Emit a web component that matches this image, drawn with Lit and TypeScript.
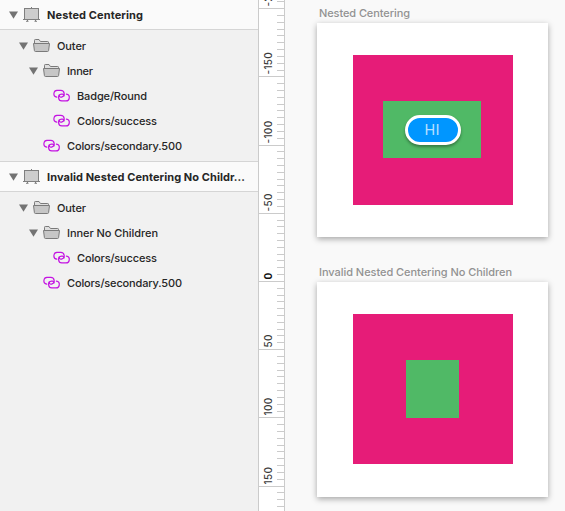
import { LitElement, html, css, svg } from "lit";
import { customElement, property } from "lit/decorators.js";

type Kind = "folder" | "symbol";
interface Layer { name: string; kind: Kind; depth: number; w: number; }
interface Group { name: string; w: number; layers: Layer[]; }

const GROUPS: Group[] = [
  {
    name: "Nested Centering", w: 96,
    layers: [
      { name: "Outer", kind: "folder", depth: 1, w: 29 },
      { name: "Inner", kind: "folder", depth: 2, w: 26 },
      { name: "Badge/Round", kind: "symbol", depth: 3, w: 70 },
      { name: "Colors/success", kind: "symbol", depth: 3, w: 80 },
      { name: "Colors/secondary.500", kind: "symbol", depth: 2, w: 115 },
    ],
  },
  {
    name: "Invalid Nested Centering No Childr...", w: 198,
    layers: [
      { name: "Outer", kind: "folder", depth: 1, w: 29 },
      { name: "Inner No Children", kind: "folder", depth: 2, w: 91 },
      { name: "Colors/success", kind: "symbol", depth: 3, w: 80 },
      { name: "Colors/secondary.500", kind: "symbol", depth: 2, w: 115 },
    ],
  },
];

const arrow = html`<svg class="arrow" width="9" height="8" viewBox="0 0 9 8"><path d="M0 .5H9L4.5 7.7Z" fill="#737373"/></svg>`;

const artboardIcon = html`<svg width="17" height="15" viewBox="0 0 17 15" fill="none" stroke="#7f7f7f">
  <path d="M8.5 0V1M4.5 13V14M12.5 13V14M3 14.3H5.5M11.5 14.3H14"/>
  <rect x="1.5" y="1.5" width="14" height="11" fill="#cdcdcd"/>
  <path d="M0 12.5H17"/>
</svg>`;

const folderIcon = html`<svg width="17" height="13" viewBox="0 0 17 13" fill="#c6c6c6" stroke="#7a7a7a" stroke-linejoin="round">
  <path d="M1.5 5V1.3Q1.5 .5 2.3 .5H6L7.4 2.5H14.7Q15.5 2.5 15.5 3.3V5" fill="#dedede"/>
  <path d="M.5 4.5H16.5L15.6 11.5Q15.5 12.5 14.5 12.5H2.5Q1.5 12.5 1.4 11.5Z"/>
</svg>`;

const symbolIcon = html`<svg width="16" height="13" viewBox="0 0 16 13" fill="none" stroke="#c414e2" stroke-width="1.2" stroke-linecap="round">
  <path d="M2.8 8.1A3.3 3.3 0 0 1 3.8 1.4H6.8A3.4 3.4 0 0 1 7.6 8.1H7Q5.1 8 5.2 6.2"/>
  <path d="M12.4 5.2A3.3 3.3 0 0 1 11.4 11.9H8.4A3.4 3.4 0 0 1 7.6 5.1H8.2Q10.1 5.2 10 7"/>
</svg>`;

@customElement("layer-list")
class LayerList extends LitElement {
  static styles = css`
    :host { display: block; font: 500 11px/25px Inter, "Liberation Sans", sans-serif; }
    svg { display: block; flex: none; overflow: visible; }
    .head { display: flex; align-items: center; height: 29px; padding-left: 9px; background: #fafafa; border-bottom: 1px solid #d5d5d5; font-weight: 700; }
    .head.next { border-top: 1px solid #d5d5d5; }
    .arrow { margin: 1px 5px 0 0; }
    .rows { padding: 3px 0; }
    .row { display: flex; align-items: center; height: 25px; }
    .d1 { padding-left: 19px; }
    .d2 { padding-left: 29px; }
    .symbol.d2 { padding-left: 44px; }
    .symbol.d3 { padding-left: 54px; }
    .label { margin-left: 7px; }
    text { fill: #262626; }
  `;
  label(t: string, w: number) {
    return html`<svg class="label" width=${w} height="25"><text x="0" y="16.5" textLength=${w}>${t}</text></svg>`;
  }
  render() {
    return GROUPS.map((g, i) => html`
      <div class="head ${i ? "next" : ""}">${arrow}${artboardIcon}${this.label(g.name, g.w)}</div>
      <div class="rows">
        ${g.layers.map((l) => html`<div class="row ${l.kind} d${l.depth}">
          ${l.kind === "folder" ? html`${arrow}${folderIcon}` : symbolIcon}${this.label(l.name, l.w)}
        </div>`)}
      </div>`);
  }
}

@customElement("canvas-ruler")
class CanvasRuler extends LitElement {
  static styles = css`
    :host { display: block; height: 511px; background: #fff; border: solid #cbcbcb; border-width: 0 1px; overflow: hidden; }
    svg { display: block; }
    text { font: 500 10px Inter, "Liberation Sans", sans-serif; fill: #3c3c3c; letter-spacing: .3px; }
    .zero { font-weight: 700; fill: #111; }
  `;
  render() {
    const ticks = Array.from({ length: 75 }, (_, n) => {
      const k = n - 1;
      const y = Math.floor(8.62 + 6.82 * k);
      const major = k % 10 === 0;
      const value = k * 5 - 200;
      return svg`<rect x=${major ? 0 : 18} y=${y} width=${major ? 25 : 7} height="1" fill="#cbcbcb"/>
        ${major ? svg`<text class=${value === 0 ? "zero" : ""} transform="translate(12.5 ${y - 1.5}) rotate(-90)">${value}</text>` : ""}`;
    });
    return html`<svg width="25" height="511">${ticks}</svg>`;
  }
}

@customElement("art-board")
class ArtBoard extends LitElement {
  @property() name = "";
  @property({ type: Number }) w = 0;
  @property({ type: Boolean }) badge = false;
  static styles = css`
    :host { display: block; width: 231px; }
    .title { display: block; margin-left: 2px; height: 17px; overflow: visible; }
    .title text { font: 500 11px Inter, "Liberation Sans", sans-serif; fill: #929292; }
    .board { height: 214px; background: #fff; box-shadow: 0 2px 6px rgba(0,0,0,.34); padding: 32px 35px 32px 36px; box-sizing: border-box; }
    .board.plain { height: 215px; }
    .outer { height: 150px; background: #e61c78; display: flex; padding: 46px 0 0 53px; box-sizing: border-box; }
    .outer.badge { padding-left: 30px; }
    .inner { width: 53px; height: 58px; background: #50b966; }
    .wide { width: 98px; height: 57px; display: flex; justify-content: center; align-items: center; }
    .pill { width: 56px; height: 30px; margin: 1px 0 0 1px; box-sizing: border-box; border: 3px solid #fff; border-radius: 15px; background: #0096ff; box-shadow: 0 2px 3px rgba(0,0,0,.35); }
    .pill svg { display: block; }
    .pill text { font: 400 15px Roboto, sans-serif; fill: #b5dfff; }
  `;
  render() {
    return html`
      <svg class="title" width=${this.w}><text x="0" y="11" textLength=${this.w}>${this.name}</text></svg>
      <div class="board ${this.badge ? "" : "plain"}"><div class="outer ${this.badge ? "badge" : ""}">
        <div class="inner ${this.badge ? "wide" : ""}">
          ${this.badge ? html`<div class="pill"><svg width="50" height="24"><text x="16.5" y="17" textLength="15">HI</text></svg></div>` : ""}
        </div>
      </div></div>`;
  }
}

@customElement("app-root")
class AppRoot extends LitElement {
  static styles = css`
    :host { display: grid; grid-template-columns: 258px 27px 1fr; width: 565px; height: 511px; overflow: hidden; background: #f1f1f1; }
    .canvas { background: #f9f9f9; padding: 6px 0 0 32px; display: grid; align-content: start; gap: 28px; }
  `;
  render() {
    return html`
      <layer-list></layer-list>
      <canvas-ruler></canvas-ruler>
      <div class="canvas">
        <art-board name="Nested Centering" w="91" badge></art-board>
        <art-board name="Invalid Nested Centering No Children" w="193"></art-board>
      </div>`;
  }
}
